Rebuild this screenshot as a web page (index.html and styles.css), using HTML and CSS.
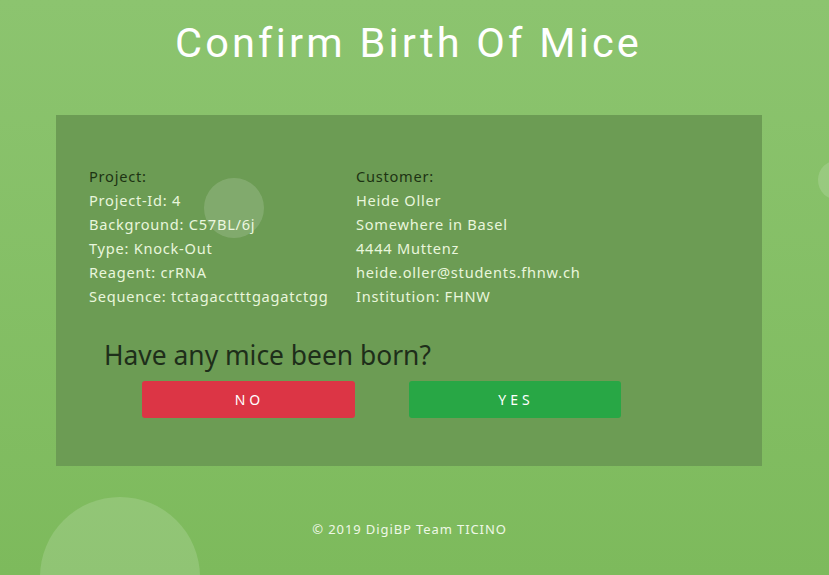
FILE: index.html
```html
<!DOCTYPE html>
<html>
<head>
<meta charset="utf-8">
<link rel="stylesheet" href="styles.css">
</head>
<body>
<div class="page">
  <h1 class="title">Confirm Birth Of Mice</h1>
  <div class="panel">
    <div class="info">
      <div class="col col-left">
        <div class="label">Project:</div>
        <div>Project-Id: 4</div>
        <div>Background: C57BL/6j</div>
        <div>Type: Knock-Out</div>
        <div>Reagent: crRNA</div>
        <div>Sequence: tctagacctttgagatctgg</div>
      </div>
      <div class="col">
        <div class="label">Customer:</div>
        <div>Heide Oller</div>
        <div>Somewhere in Basel</div>
        <div>4444 Muttenz</div>
        <div>heide.oller@students.fhnw.ch</div>
        <div>Institution: FHNW</div>
      </div>
    </div>
    <h2 class="question">Have any mice been born?</h2>
    <div class="buttons">
      <button class="btn btn-no">NO</button>
      <button class="btn btn-yes">YES</button>
    </div>
  </div>
  <footer class="footer">© 2019 DigiBP Team TICINO</footer>
</div>
<div class="bubbles">
  <div class="bubble bubble-a"></div>
  <div class="bubble bubble-b"></div>
  <div class="bubble bubble-c"></div>
</div>
</body>
</html>
```

FILE: styles.css
```css
html, body {
  margin: 0;
  padding: 0;
  height: 100%;
  overflow: hidden;
}
body {
  background: linear-gradient(to bottom, #8cc46f 0%, #7dba5c 100%);
  font-family: "Noto Sans", "Open Sans", sans-serif;
  position: relative;
}
.page {
  display: flex;
  flex-direction: column;
  height: 575px;
}
.title {
  margin: 21px 0 0 0;
  height: 44px;
  line-height: 44px;
  text-align: center;
  font-family: Roboto, sans-serif;
  font-weight: 400;
  font-size: 41.5px;
  letter-spacing: 3.2px;
  color: #ffffff;
  padding-right: 12px;
}
.panel {
  margin: 50px 0 0 56px;
  width: 706px;
  height: 351px;
  box-sizing: border-box;
  background: #6c9c54;
  padding: 49px 0 0 33px;
  display: flex;
  flex-direction: column;
}
.info {
  display: flex;
  font-size: 14.6px;
  line-height: 24px;
  letter-spacing: 0.75px;
  color: #e9f6dc;
}
.col-left {
  width: 267px;
}
.label {
  color: #1d3313;
}
.question {
  margin: 31px 0 0 15px;
  font-family: "Noto Sans", sans-serif;
  font-weight: 400;
  font-size: 26.4px;
  line-height: 32px;
  color: #1e2e1a;
}
.buttons {
  display: flex;
  gap: 54px;
  margin: 10px 0 0 53px;
}
.btn {
  border: none;
  border-radius: 3px;
  height: 37px;
  font-family: "Noto Sans", sans-serif;
  font-size: 14px;
  letter-spacing: 4px;
  color: #ffffff;
  padding: 0 0 0 2px;
}
.btn-no {
  width: 213px;
  background: #dc3545;
}
.btn-yes {
  width: 212px;
  background: #28a745;
}
.footer {
  margin-top: 54px;
  text-align: center;
  font-size: 13px;
  color: #eef8e6;
  letter-spacing: 0.9px;
  padding-right: 10px;
}
.bubbles {
  position: absolute;
  left: 0;
  top: 0;
  width: 829px;
  height: 575px;
  overflow: hidden;
  pointer-events: none;
}
.bubble {
  position: absolute;
  border-radius: 50%;
  background: rgba(255, 255, 255, 0.15);
}
.bubble-a {
  left: 204px;
  top: 178px;
  width: 60px;
  height: 60px;
}
.bubble-b {
  left: 818px;
  top: 160px;
  width: 40px;
  height: 40px;
}
.bubble-c {
  left: 40px;
  top: 497px;
  width: 160px;
  height: 160px;
}
```
